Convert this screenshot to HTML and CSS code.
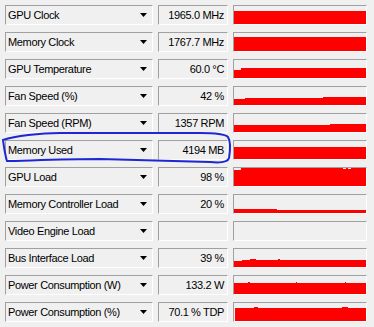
FILE: index.html
```
<!DOCTYPE html>
<html>
<head>
<meta charset="utf-8">
<title>Sensors</title>
<link rel="stylesheet" href="styles.css">
</head>
<body>
<div class="sensors">

<div class="row">
 <div class="combo"><span class="label">GPU Clock</span><svg class="arrow" width="7" height="4"><polygon points="0,0 7,0 3.5,4"/></svg></div>
 <div class="value">1965.0 MHz</div>
 <div class="graph"><svg width="132" height="18" viewBox="0 0 132 18"><polygon points="0,5 132,5 132,18 0,18"/></svg></div>
</div>

<div class="row">
 <div class="combo"><span class="label">Memory Clock</span><svg class="arrow" width="7" height="4"><polygon points="0,0 7,0 3.5,4"/></svg></div>
 <div class="value">1767.7 MHz</div>
 <div class="graph"><svg width="132" height="18" viewBox="0 0 132 18"><polygon points="0,4 132,4 132,18 0,18"/></svg></div>
</div>

<div class="row">
 <div class="combo"><span class="label">GPU Temperature</span><svg class="arrow" width="7" height="4"><polygon points="0,0 7,0 3.5,4"/></svg></div>
 <div class="value">60.0 °C</div>
 <div class="graph"><svg width="132" height="18" viewBox="0 0 132 18"><polygon points="0,10 7,10 7,8 132,8 132,18 0,18"/></svg></div>
</div>

<div class="row">
 <div class="combo"><span class="label">Fan Speed (%)</span><svg class="arrow" width="7" height="4"><polygon points="0,0 7,0 3.5,4"/></svg></div>
 <div class="value">42 %</div>
 <div class="graph"><svg width="132" height="18" viewBox="0 0 132 18"><polygon points="0,12 11,12 11,11 89,11 89,10 132,10 132,18 0,18"/></svg></div>
</div>

<div class="row">
 <div class="combo"><span class="label">Fan Speed (RPM)</span><svg class="arrow" width="7" height="4"><polygon points="0,0 7,0 3.5,4"/></svg></div>
 <div class="value">1357 RPM</div>
 <div class="graph"><svg width="132" height="18" viewBox="0 0 132 18"><polygon points="0,11 96,11 96,10 132,10 132,18 0,18"/></svg></div>
</div>

<div class="row">
 <div class="combo"><span class="label">Memory Used</span><svg class="arrow" width="7" height="4"><polygon points="0,0 7,0 3.5,4"/></svg></div>
 <div class="value">4194 MB</div>
 <div class="graph"><svg width="132" height="18" viewBox="0 0 132 18"><polygon points="0,6 132,6 132,18 0,18"/></svg></div>
</div>

<div class="row">
 <div class="combo"><span class="label">GPU Load</span><svg class="arrow" width="7" height="4"><polygon points="0,0 7,0 3.5,4"/></svg></div>
 <div class="value">98 %</div>
 <div class="graph"><svg width="132" height="18" viewBox="0 0 132 18"><polygon points="0,2 7,2 7,0 109,0 109,1 112,1 112,0 114,0 114,1 117,1 117,0 132,0 132,18 0,18"/></svg></div>
</div>

<div class="row">
 <div class="combo"><span class="label">Memory Controller Load</span><svg class="arrow" width="7" height="4"><polygon points="0,0 7,0 3.5,4"/></svg></div>
 <div class="value">20 %</div>
 <div class="graph"><svg width="132" height="18" viewBox="0 0 132 18"><polygon points="0,14 43,14 43,15 132,15 132,18 0,18"/></svg></div>
</div>

<div class="row">
 <div class="combo"><span class="label">Video Engine Load</span><svg class="arrow" width="7" height="4"><polygon points="0,0 7,0 3.5,4"/></svg></div>
 <div class="value"></div>
 <div class="graph"></div>
</div>

<div class="row">
 <div class="combo"><span class="label">Bus Interface Load</span><svg class="arrow" width="7" height="4"><polygon points="0,0 7,0 3.5,4"/></svg></div>
 <div class="value">39 %</div>
 <div class="graph"><svg width="132" height="18" viewBox="0 0 132 18"><polygon points="0,12 8,12 8,11 16,11 16,10 22,10 22,11 44,11 44,10 46,10 46,11 132,11 132,18 0,18"/></svg></div>
</div>

<div class="row">
 <div class="combo"><span class="label">Power Consumption (W)</span><svg class="arrow" width="7" height="4"><polygon points="0,0 7,0 3.5,4"/></svg></div>
 <div class="value">133.2 W</div>
 <div class="graph"><svg width="132" height="18" viewBox="0 0 132 18"><polygon points="0,7 14,7 14,6 16,6 16,7 62,7 62,6 63,6 63,7 111,7 111,6 112,6 112,7 132,7 132,18 0,18"/></svg></div>
</div>

<div class="row">
 <div class="combo"><span class="label">Power Consumption (%)</span><svg class="arrow" width="7" height="4"><polygon points="0,0 7,0 3.5,4"/></svg></div>
 <div class="value">70.1 % TDP</div>
 <div class="graph"><svg width="132" height="18" viewBox="0 0 132 18"><polygon points="1,5 20,5 20,4 24,4 24,5 108,5 108,4 114,4 114,5 132,5 132,18 1,18"/></svg></div>
</div>

<!-- hand drawn mark round the memory row -->
<svg class="mark" width="240" height="170" viewBox="0 0 240 170">
 <path d="M3 140 C15 136 40 133 60 133 L200 133 C215 133 225 134 228 137 C231 142 230 152 229 158 C228 162 220 163 210 162 L100 159 C60 159 20 161 7 161 C5 155 4 147 3 140 Z"/>
</svg>

</div>
</body>
</html>
```

FILE: styles.css
```
body {
	margin: 0;
	background: #f0f0f0;
	font-family: "Liberation Sans", Arial, sans-serif;
	font-size: 11px;
	letter-spacing: -0.35px;
	color: #000;
}

.sensors {
	position: relative;
	display: flex;
	flex-direction: column;
	gap: 7px;
	padding: 5px 0 0 5px;
}

.row {
	display: grid;
	grid-template-columns: 148px 70px 134px;
	column-gap: 5px;
	height: 20px;
}

.combo, .value, .graph {
	box-sizing: border-box;
	height: 20px;
	border-top: 1px solid #a0a0a0;
	border-left: 1px solid #a0a0a0;
	border-right: 1px solid #fff;
	border-bottom: 1px solid #fff;
}

.combo {
	display: flex;
	align-items: center;
	justify-content: space-between;
	padding: 0 5px 0 2px;
}

.arrow polygon {
	fill: #000;
}

.value {
	line-height: 18px;
	text-align: right;
	padding-right: 3px;
	white-space: nowrap;
}

.graph svg {
	display: block;
}

.graph polygon {
	fill: #ff0000;
}

.mark {
	position: absolute;
	left: 0;
	top: 0;
	pointer-events: none;
}

.mark path {
	fill: none;
	stroke: #1e28d2;
	stroke-width: 2;
	stroke-linecap: round;
}
```
